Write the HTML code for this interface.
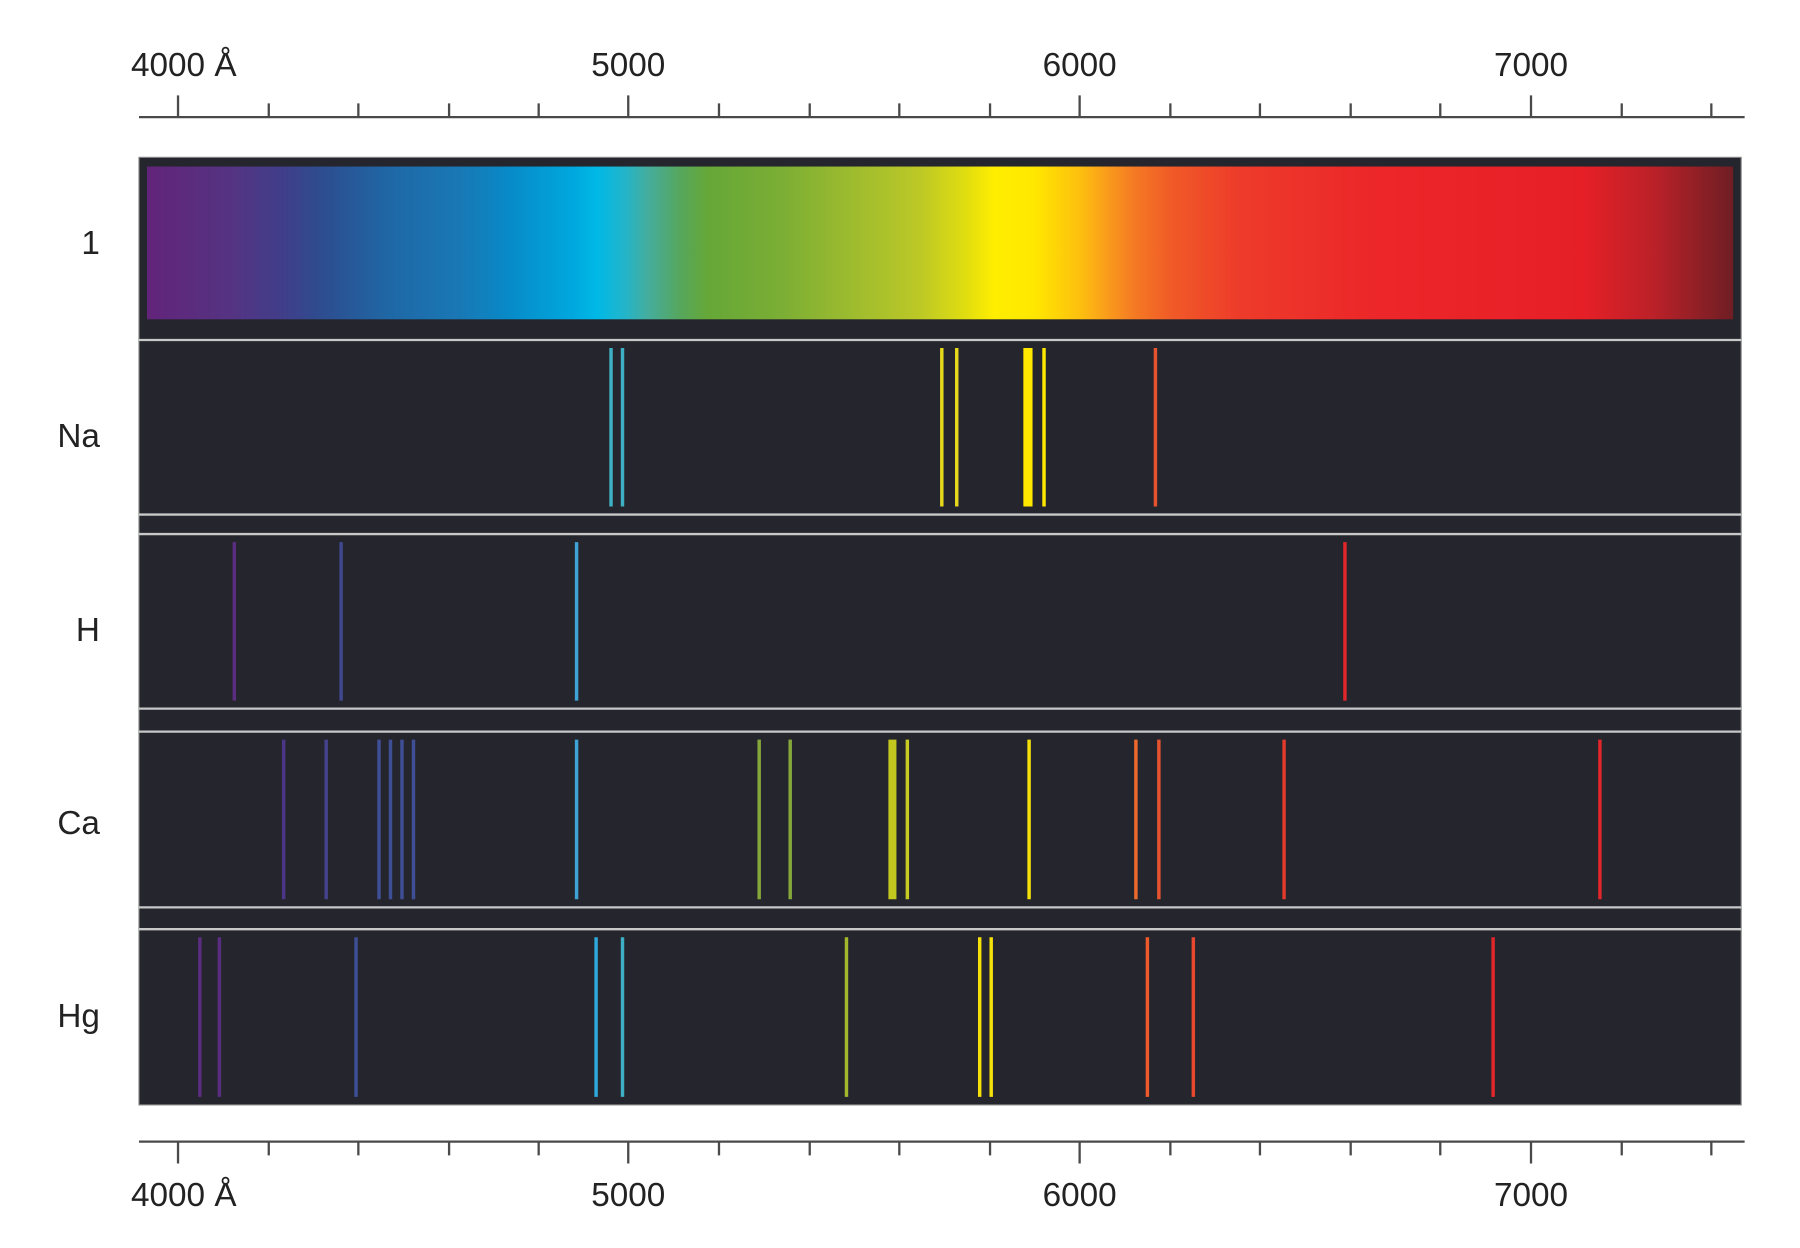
<!DOCTYPE html>
<html><head><style>html,body{margin:0;padding:0;background:#fff;}svg{display:block}</style></head>
<body>
<svg width="1800" height="1248" viewBox="0 0 1567.2 1086.6" xmlns="http://www.w3.org/2000/svg" font-family="Liberation Sans, sans-serif">
<defs>
<linearGradient id="rb" x1="128" x2="1509" y1="0" y2="0" gradientUnits="userSpaceOnUse">
<stop offset="0" stop-color="#62247a"/>
<stop offset="0.052" stop-color="#553382"/>
<stop offset="0.088" stop-color="#3f3f8a"/>
<stop offset="0.11" stop-color="#2d4d8f"/>
<stop offset="0.154" stop-color="#1f68a6"/>
<stop offset="0.197" stop-color="#1978b4"/>
<stop offset="0.226" stop-color="#0889c6"/>
<stop offset="0.269" stop-color="#00a8de"/>
<stop offset="0.284" stop-color="#00b9e6"/>
<stop offset="0.302" stop-color="#25b4c8"/>
<stop offset="0.316" stop-color="#45ad9c"/>
<stop offset="0.335" stop-color="#55a760"/>
<stop offset="0.353" stop-color="#65a738"/>
<stop offset="0.4" stop-color="#7bae34"/>
<stop offset="0.443" stop-color="#9cbb2f"/>
<stop offset="0.487" stop-color="#bcc826"/>
<stop offset="0.516" stop-color="#e0dd10"/>
<stop offset="0.534" stop-color="#ffee00"/>
<stop offset="0.559" stop-color="#ffe800"/>
<stop offset="0.588" stop-color="#fdc00e"/>
<stop offset="0.606" stop-color="#f99b1c"/>
<stop offset="0.621" stop-color="#f57c23"/>
<stop offset="0.646" stop-color="#f05a27"/>
<stop offset="0.689" stop-color="#ed3b2a"/>
<stop offset="0.776" stop-color="#ec2629"/>
<stop offset="0.906" stop-color="#e61f27"/>
<stop offset="0.95" stop-color="#bb2128"/>
<stop offset="1" stop-color="#6e1e24"/>
</linearGradient>
</defs>
<g fill="#222" font-size="29" text-anchor="middle">
<text x="160" y="66">4000 Å</text><text x="547" y="66">5000</text><text x="940" y="66">6000</text><text x="1333" y="66">7000</text>
<text x="160" y="1050">4000 Å</text><text x="547" y="1050">5000</text><text x="940" y="1050">6000</text><text x="1333" y="1050">7000</text>
</g>
<g fill="#222" font-size="29" text-anchor="end">
<text x="87" y="221">1</text><text x="87" y="389">Na</text><text x="87" y="558">H</text><text x="87" y="726">Ca</text><text x="87" y="894">Hg</text>
</g>
<g stroke="#4a4a4a" stroke-width="2">
<line x1="121" y1="102" x2="1519" y2="102"/>
<line x1="121" y1="994" x2="1519" y2="994"/>
<path d="M155 83V102M547 83V102M940 83V102M1333 83V102M234 90V102M312 90V102M391 90V102M469 90V102M626 90V102M705 90V102M783 90V102M862 90V102M1019 90V102M1097 90V102M1176 90V102M1254 90V102M1412 90V102M1490 90V102"/>
<path d="M155 994V1013M547 994V1013M940 994V1013M1333 994V1013M234 994V1006M312 994V1006M391 994V1006M469 994V1006M626 994V1006M705 994V1006M783 994V1006M862 994V1006M1019 994V1006M1097 994V1006M1176 994V1006M1254 994V1006M1412 994V1006M1490 994V1006"/>
</g>
<rect x="121" y="137" width="1395" height="825" fill="#25252d" stroke="#888" stroke-width="1"/>
<rect x="128" y="145" width="1381" height="133" fill="url(#rb)"/>
<g stroke="#c8c8c8" stroke-width="2">
<line x1="121" y1="296" x2="1516" y2="296"/><line x1="121" y1="448" x2="1516" y2="448"/>
<line x1="121" y1="465" x2="1516" y2="465"/><line x1="121" y1="617" x2="1516" y2="617"/>
<line x1="121" y1="637" x2="1516" y2="637"/><line x1="121" y1="790" x2="1516" y2="790"/>
<line x1="121" y1="809" x2="1516" y2="809"/>
</g>
<g stroke-width="3">
<path d="M532 303V441M542 303V441" stroke="#3eb0c4"/>
<path d="M820 303V441M833 303V441" stroke="#e6d81a"/>
<path d="M895 303V441" stroke="#ffe800" stroke-width="8"/>
<path d="M909 303V441" stroke="#ffe800"/>
<path d="M1006 303V441" stroke="#e8532f"/>
<path d="M204 472V610" stroke="#5a2d80"/>
<path d="M297 472V610" stroke="#404890"/>
<path d="M502 472V610" stroke="#3ea4d6"/>
<path d="M1171 472V610" stroke="#e2272a"/>
<path d="M247 644V783" stroke="#4a3587"/>
<path d="M284 644V783" stroke="#45428c"/>
<path d="M330 644V783M340 644V783M350 644V783M360 644V783" stroke="#3f4f96"/>
<path d="M502 644V783" stroke="#3ea4d6"/>
<path d="M661 644V783M688 644V783" stroke="#86a83a"/>
<path d="M777 644V783" stroke="#c3c81e" stroke-width="7"/>
<path d="M790 644V783" stroke="#c8cc22"/>
<path d="M896 644V783" stroke="#f5e10a"/>
<path d="M989 644V783" stroke="#ee6a2c"/>
<path d="M1009 644V783" stroke="#e8532f"/>
<path d="M1118 644V783" stroke="#e23a2c"/>
<path d="M1393 644V783" stroke="#e2272a"/>
<path d="M174 816V955M191 816V955" stroke="#5a2d80"/>
<path d="M310 816V955" stroke="#3f4f96"/>
<path d="M519 816V955" stroke="#2fa8dc"/>
<path d="M542 816V955" stroke="#3eb0c4"/>
<path d="M737 816V955" stroke="#a4b82c"/>
<path d="M853 816V955M863 816V955" stroke="#f5e10a"/>
<path d="M999 816V955" stroke="#ee5a2c"/>
<path d="M1039 816V955" stroke="#e8482d"/>
<path d="M1300 816V955" stroke="#e2272a"/>
</g>
</svg>
</body></html>
